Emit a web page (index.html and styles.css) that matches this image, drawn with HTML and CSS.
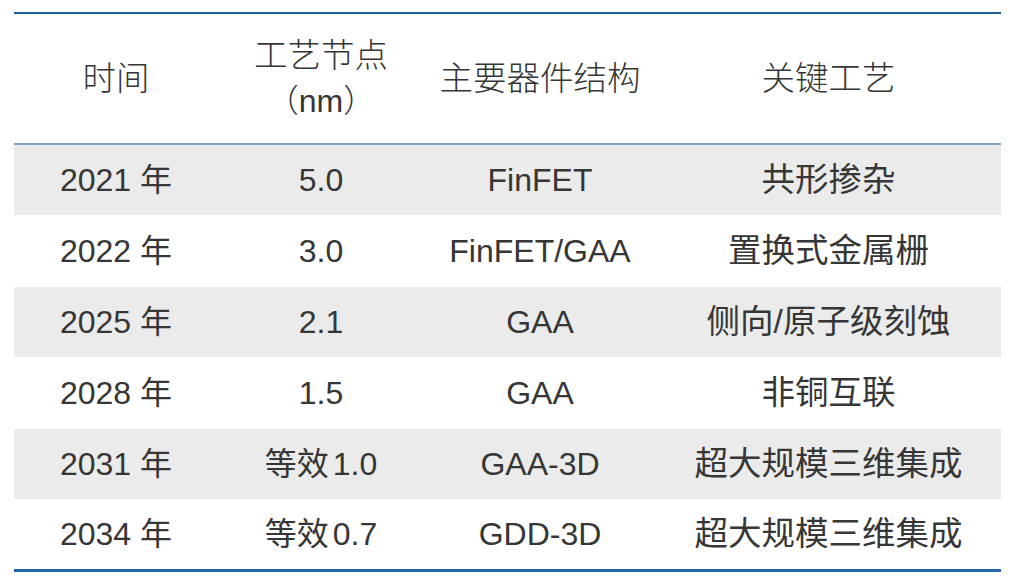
FILE: index.html
```html
<!DOCTYPE html>
<html lang="zh-CN">
<head>
<meta charset="utf-8">
<link rel="stylesheet" href="styles.css">
</head>
<body>
<div class="wrap">
  <div class="table">
    <div class="row head">
      <div class="cell"><span class="zh">时间</span></div>
      <div class="cell two"><span class="zh">工艺节点</span><br>（nm）</div>
      <div class="cell"><span class="zh">主要器件结构</span></div>
      <div class="cell"><span class="zh">关键工艺</span></div>
    </div>
    <div class="row shade">
      <div class="cell">2021 年</div>
      <div class="cell">5.0</div>
      <div class="cell">FinFET</div>
      <div class="cell"><span class="zh">共形掺杂</span></div>
    </div>
    <div class="row tall">
      <div class="cell">2022 年</div>
      <div class="cell">3.0</div>
      <div class="cell">FinFET/GAA</div>
      <div class="cell"><span class="zh">置换式金属栅</span></div>
    </div>
    <div class="row shade">
      <div class="cell">2025 年</div>
      <div class="cell">2.1</div>
      <div class="cell">GAA</div>
      <div class="cell"><span class="zh">侧向/原子级刻蚀</span></div>
    </div>
    <div class="row tall">
      <div class="cell">2028 年</div>
      <div class="cell">1.5</div>
      <div class="cell">GAA</div>
      <div class="cell"><span class="zh">非铜互联</span></div>
    </div>
    <div class="row shade">
      <div class="cell">2031 年</div>
      <div class="cell"><span class="eq">等效</span>1.0</div>
      <div class="cell">GAA-3D</div>
      <div class="cell"><span class="zh">超大规模三维集成</span></div>
    </div>
    <div class="row last">
      <div class="cell">2034 年</div>
      <div class="cell"><span class="eq">等效</span>0.7</div>
      <div class="cell">GDD-3D</div>
      <div class="cell"><span class="zh">超大规模三维集成</span></div>
    </div>
  </div>
</div>
</body>
</html>
```

FILE: styles.css
```css
html, body {
  margin: 0;
  padding: 0;
  background: #ffffff;
}
.wrap {
  padding: 12px 20px 0 14px;
}
.table {
  width: 987px;
  border-top: 2px solid #1c5f96;
  border-bottom: 3px solid #1d67aa;
  font-family: "Liberation Sans", "Noto Sans CJK SC", sans-serif;
  font-size: 32px;
  color: #363636;
}
.row {
  display: grid;
  grid-template-columns: 204px 206px 232px 345px;
  height: 71px;
  align-items: center;
}
.row.head {
  height: 129px;
  border-bottom: 2px solid #7ea2c2;
  font-weight: 300;
}
.row.shade {
  background: #ebebeb;
  height: 70px;
}
.row.tall {
  height: 72px;
}
.row.last {
  height: 70px;
}
.cell {
  text-align: center;
  white-space: nowrap;
  line-height: 36px;
}
.cell.two {
  line-height: 45px;
}
.zh {
  font-size: 33.5px;
}
.eq {
  margin-right: 4px;
}
```
